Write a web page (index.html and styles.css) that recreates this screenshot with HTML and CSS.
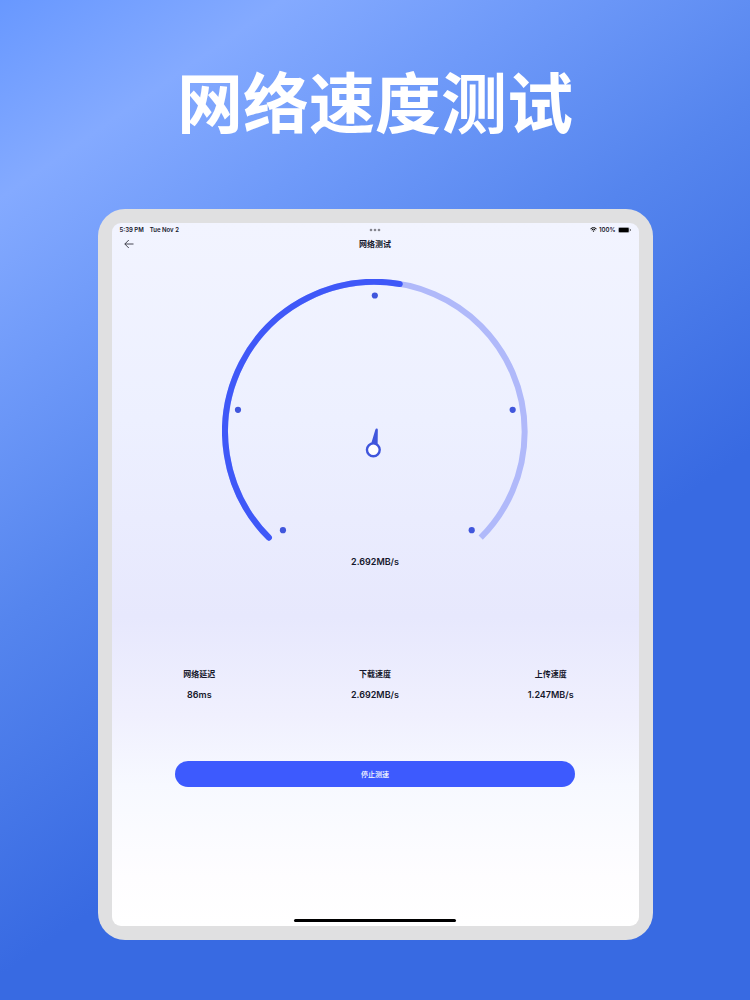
FILE: index.html
```html
<!DOCTYPE html>
<html lang="zh-CN">
<head>
  <meta charset="UTF-8" />
  <meta name="viewport" content="width=device-width, initial-scale=1" />
  <title>网络速度测试</title>
  <link rel="stylesheet" href="styles.css">
</head>
<body>

  <h1 class="headline">网络速度测试</h1>

  <div class="tablet">
    <main class="screen">

      <div class="status-bar">
        <div class="status-left">
          <span>5:39 PM</span>
          <span>Tue Nov 2</span>
        </div>
        <svg class="status-dots" viewBox="0 0 12 4" aria-hidden="true">
          <circle cx="2" cy="2" r="1.3" />
          <circle cx="6" cy="2" r="1.3" />
          <circle cx="10" cy="2" r="1.3" />
        </svg>
        <div class="status-right">
          <svg class="wifi" viewBox="0 0 14 10" aria-hidden="true">
            <path d="M1 3.6a8.6 8.6 0 0 1 12 0" />
            <path d="M3.3 6a5.3 5.3 0 0 1 7.4 0" />
            <path class="wifi-tip" d="M5 7.7a3 3 0 0 1 4 0L7 9.8z" />
          </svg>
          <span>100%</span>
          <svg class="battery" viewBox="0 0 26 12" aria-hidden="true">
            <rect class="battery-shell" x=".5" y=".5" width="22" height="11" rx="3" />
            <rect x="1.500" y="1.500" width="20" height="9" rx="2" />
            <path d="M24 4v4c1-.4 1.6-1.1 1.6-2S25 4.400 24 4z" />
          </svg>
        </div>
      </div>

      <header class="nav-bar">
        <button class="back" type="button" aria-label="返回">
          <svg viewBox="0 0 10 10" aria-hidden="true">
            <path d="M9.500 5H.8M4.800 1 .8 5l4 4" />
          </svg>
        </button>
        <h2 class="nav-title">网络测试</h2>
      </header>

      <section class="gauge">
        <svg class="dial" viewBox="0 0 306 264" aria-hidden="true">
          <path class="dial-track" d="M47 259A150 150 0 1 1 259 259" />
          <path class="dial-value" d="M47 259A150 150 0 0 1 178 5" />
          <g class="dial-marks">
            <circle cx="61" cy="251.500" r="3.100" />
            <circle cx="16" cy="131" r="3.100" />
            <circle cx="153" cy="16.500" r="3.100" />
            <circle cx="291" cy="131" r="3.100" />
            <circle cx="250" cy="251.500" r="3.100" />
          </g>
          <path class="needle" d="M149 166l4.500-15.200c.4-1.500 2.500-1.300 2.500.2L155.800 166z" />
          <circle class="needle-hub" cx="151.500" cy="171" r="6.400" />
        </svg>
        <p class="reading">2.692MB/s</p>
      </section>

      <dl class="stats">
        <div class="stat">
          <dt>网络延迟</dt>
          <dd>86ms</dd>
        </div>
        <div class="stat">
          <dt>下载速度</dt>
          <dd>2.692MB/s</dd>
        </div>
        <div class="stat">
          <dt>上传速度</dt>
          <dd>1.247MB/s</dd>
        </div>
      </dl>

      <button class="stop" type="button">停止测速</button>

      <div class="home-indicator"></div>
    </main>
  </div>

</body>
</html>
```
FILE: styles.css
```css
* {
  margin: 0;
  padding: 0;
  box-sizing: border-box;
}

body {
  min-height: 100vh;
  padding: 56px 0 60px;
  background: linear-gradient(145deg, #6898ff 0%, #84aaff 13%, #6f9af9 25%, #5585ee 41%, #386ae2 64%, #386ae2 100%);
  color: #15172b;
  font-family: Inter, "Noto Sans CJK SC", sans-serif;
}

.headline {
  color: #fff;
  font-size: 66px;
  line-height: 96px;
  font-weight: 700;
  text-align: center;
}

/* === Tablet frame === */
.tablet {
  width: 74%;
  margin: 57px auto 0;
  padding: 14px;
  background: #e0e0e1;
  border-radius: 27px;
}

.screen {
  display: flex;
  flex-direction: column;
  padding-bottom: 4px;
  border-radius: 9px;
  background: linear-gradient(#f2f4ff 0%, #edf0ff 28%, #e7e8fd 56%, #f0f0fe 70%, #f7f9ff 80%, #fefdff 93%, #fff 100%);
}

/* === Status bar === */
.status-bar {
  display: grid;
  grid-template-columns: 1fr auto 1fr;
  align-items: center;
  height: 13px;
  padding: 0 8px;
  font-size: 6px;
  line-height: 8px;
  font-weight: 600;
}

.status-left,
.status-right {
  display: flex;
  align-items: center;
  gap: 6px;
}

.status-right {
  justify-content: flex-end;
  gap: 2px;
}

.status-dots {
  width: 12px;
  height: 4px;
  fill: #85868f;
}

.wifi {
  width: 7px;
  height: 5px;
  fill: none;
  stroke: #000;
  stroke-width: 2;
}

.wifi-tip {
  fill: #000;
  stroke: none;
}

.battery {
  width: 13px;
  height: 6px;
}

.battery-shell {
  fill: none;
  stroke: #8f909a;
}

/* === Navigation === */
.nav-bar {
  display: grid;
  grid-template-columns: 1fr auto 1fr;
  align-items: center;
  height: 16px;
  padding: 0 12px;
}

.back {
  width: 10px;
  height: 10px;
  border: 0;
  background: none;
  cursor: pointer;
}

.back svg {
  display: block;
  width: 10px;
  height: 10px;
  fill: none;
  stroke: #33343f;
  stroke-width: .9;
}

.nav-title {
  font-size: 8px;
  line-height: 12px;
  font-weight: 700;
}

/* === Gauge === */
.gauge {
  display: flex;
  flex-direction: column;
  align-items: center;
  margin-top: 27px;
}

.dial {
  width: 58%;
}

.dial-track,
.dial-value {
  fill: none;
  stroke: #b0b9fa;
  stroke-width: 6;
}

.dial-value {
  stroke: #3f58f8;
  stroke-linecap: round;
}

.dial-marks,
.needle {
  fill: #4056dc;
}

.needle-hub {
  fill: #fff;
  stroke: #4056dc;
  stroke-width: 2.4;
}

.reading,
.stat dd {
  font-size: 9px;
  line-height: 12px;
  font-weight: 600;
}

.reading {
  margin-top: 13px;
}

/* === Results === */
.stats {
  display: grid;
  grid-template-columns: repeat(3, 1fr);
  margin-top: 100px;
  text-align: center;
}

.stat dt {
  font-size: 8px;
  line-height: 12px;
  font-weight: 700;
}

.stat dd {
  margin-top: 9px;
}

.stop {
  width: 76%;
  height: 26px;
  margin: 60px auto 0;
  border: 0;
  border-radius: 13px;
  background: #3d5afe;
  color: #fff;
  font-family: inherit;
  font-size: 7px;
  font-weight: 500;
  cursor: pointer;
}

.home-indicator {
  width: 162px;
  height: 3px;
  margin: 132px auto 0;
  border-radius: 2px;
  background: #000;
}
```
